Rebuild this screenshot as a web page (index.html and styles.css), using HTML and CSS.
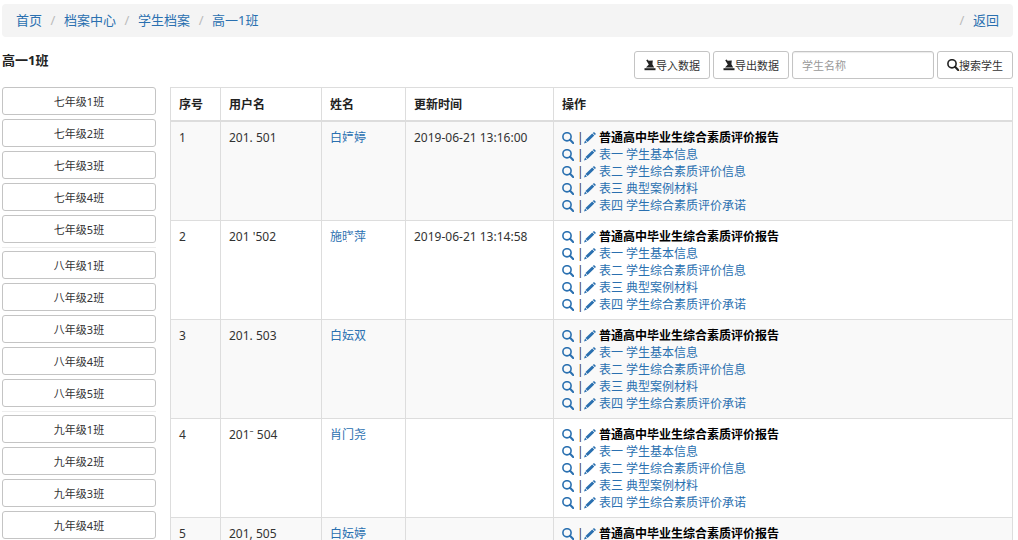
FILE: index.html
```html
<!DOCTYPE html>
<html lang="zh-CN">
<head>
  <meta charset="UTF-8" />
  <meta name="viewport" content="width=device-width, initial-scale=1.0"/>
  <title>学生档案</title>
  <link rel="stylesheet" href="styles.css">
</head>
<body>
  <svg class="sprite" aria-hidden="true">
    <symbol id="i-search" viewBox="0 0 12 12">
      <circle cx="5" cy="4.8" r="4.1" fill="none" stroke="currentColor" stroke-width="1.6"/>
      <path d="M8 7.8L11.2 11" stroke="currentColor" stroke-width="2.1" stroke-linecap="round"/>
    </symbol>
    <symbol id="i-pencil" viewBox="0 0 12 12">
      <path d="M10 0L12 1.9L10.8 3.1L8.8 1.1ZM8.2 1.6L10.3 3.6L3.6 10L1.5 7.9ZM1.1 8.5L3 10.4L0 11.6Z" fill="currentColor"/>
    </symbol>
    <symbol id="i-transfer" viewBox="0 0 12 12">
      <path d="M0.5 9.2H11.5V11.2H0.5Z" fill="currentColor"/>
      <path d="M2.2 1.2L3.6 0.6L4.6 1.8L8.8 1.4L8.4 5.2L10.2 8.4H2L4.8 5.4Z" fill="currentColor"/>
    </symbol>
  </svg>

  <nav class="breadcrumb">
    <ol>
      <li><a href="#">首页</a></li>
      <li><a href="#">档案中心</a></li>
      <li><a href="#">学生档案</a></li>
      <li><a href="#">高一1班</a></li>
    </ol>
    <span class="back"><a href="#">返回</a></span>
  </nav>

  <header class="toolbar">
    <h1>高一1班</h1>
    <form class="tools">
      <button type="button" class="btn"><svg class="icon"><use href="#i-transfer"/></svg>导入数据</button>
      <button type="button" class="btn"><svg class="icon"><use href="#i-transfer"/></svg>导出数据</button>
      <input type="text" class="search" placeholder="学生名称" aria-label="学生名称">
      <button type="button" class="btn"><svg class="icon"><use href="#i-search"/></svg>搜索学生</button>
    </form>
  </header>

  <div class="content">
    <aside class="classes">
      <div class="group">
        <button type="button" class="btn">七年级1班</button>
        <button type="button" class="btn">七年级2班</button>
        <button type="button" class="btn">七年级3班</button>
        <button type="button" class="btn">七年级4班</button>
        <button type="button" class="btn">七年级5班</button>
      </div>
      <div class="group">
        <button type="button" class="btn">八年级1班</button>
        <button type="button" class="btn">八年级2班</button>
        <button type="button" class="btn">八年级3班</button>
        <button type="button" class="btn">八年级4班</button>
        <button type="button" class="btn">八年级5班</button>
      </div>
      <div class="group">
        <button type="button" class="btn">九年级1班</button>
        <button type="button" class="btn">九年级2班</button>
        <button type="button" class="btn">九年级3班</button>
        <button type="button" class="btn">九年级4班</button>
      </div>
    </aside>

    <table class="students">
      <colgroup>
        <col class="c-no"><col class="c-user"><col class="c-name"><col class="c-time"><col>
      </colgroup>
      <thead>
        <tr><th>序号</th><th>用户名</th><th>姓名</th><th>更新时间</th><th>操作</th></tr>
      </thead>
      <tbody>
        <tr>
          <td>1</td>
          <td>201. 501</td>
          <td><a href="#">白<span class="masked">婷</span>婷</a></td>
          <td>2019-06-21 13:16:00</td>
          <td>
            <ul class="forms">
              <li><a href="#" aria-label="查看"><svg class="icon"><use href="#i-search"/></svg></a><i>|</i><a href="#" aria-label="编辑"><svg class="icon"><use href="#i-pencil"/></svg></a><b>普通高中毕业生综合素质评价报告</b></li>
              <li><a href="#" aria-label="查看"><svg class="icon"><use href="#i-search"/></svg></a><i>|</i><a href="#"><svg class="icon"><use href="#i-pencil"/></svg>表一 学生基本信息</a></li>
              <li><a href="#" aria-label="查看"><svg class="icon"><use href="#i-search"/></svg></a><i>|</i><a href="#"><svg class="icon"><use href="#i-pencil"/></svg>表二 学生综合素质评价信息</a></li>
              <li><a href="#" aria-label="查看"><svg class="icon"><use href="#i-search"/></svg></a><i>|</i><a href="#"><svg class="icon"><use href="#i-pencil"/></svg>表三 典型案例材料</a></li>
              <li><a href="#" aria-label="查看"><svg class="icon"><use href="#i-search"/></svg></a><i>|</i><a href="#"><svg class="icon"><use href="#i-pencil"/></svg>表四 学生综合素质评价承诺</a></li>
            </ul>
          </td>
        </tr>
        <tr>
          <td>2</td>
          <td>201 '502</td>
          <td><a href="#">施<span class="masked">晓</span>萍</a></td>
          <td>2019-06-21 13:14:58</td>
          <td>
            <ul class="forms">
              <li><a href="#" aria-label="查看"><svg class="icon"><use href="#i-search"/></svg></a><i>|</i><a href="#" aria-label="编辑"><svg class="icon"><use href="#i-pencil"/></svg></a><b>普通高中毕业生综合素质评价报告</b></li>
              <li><a href="#" aria-label="查看"><svg class="icon"><use href="#i-search"/></svg></a><i>|</i><a href="#"><svg class="icon"><use href="#i-pencil"/></svg>表一 学生基本信息</a></li>
              <li><a href="#" aria-label="查看"><svg class="icon"><use href="#i-search"/></svg></a><i>|</i><a href="#"><svg class="icon"><use href="#i-pencil"/></svg>表二 学生综合素质评价信息</a></li>
              <li><a href="#" aria-label="查看"><svg class="icon"><use href="#i-search"/></svg></a><i>|</i><a href="#"><svg class="icon"><use href="#i-pencil"/></svg>表三 典型案例材料</a></li>
              <li><a href="#" aria-label="查看"><svg class="icon"><use href="#i-search"/></svg></a><i>|</i><a href="#"><svg class="icon"><use href="#i-pencil"/></svg>表四 学生综合素质评价承诺</a></li>
            </ul>
          </td>
        </tr>
        <tr>
          <td>3</td>
          <td>201. 503</td>
          <td><a href="#">白妘双</a></td>
          <td></td>
          <td>
            <ul class="forms">
              <li><a href="#" aria-label="查看"><svg class="icon"><use href="#i-search"/></svg></a><i>|</i><a href="#" aria-label="编辑"><svg class="icon"><use href="#i-pencil"/></svg></a><b>普通高中毕业生综合素质评价报告</b></li>
              <li><a href="#" aria-label="查看"><svg class="icon"><use href="#i-search"/></svg></a><i>|</i><a href="#"><svg class="icon"><use href="#i-pencil"/></svg>表一 学生基本信息</a></li>
              <li><a href="#" aria-label="查看"><svg class="icon"><use href="#i-search"/></svg></a><i>|</i><a href="#"><svg class="icon"><use href="#i-pencil"/></svg>表二 学生综合素质评价信息</a></li>
              <li><a href="#" aria-label="查看"><svg class="icon"><use href="#i-search"/></svg></a><i>|</i><a href="#"><svg class="icon"><use href="#i-pencil"/></svg>表三 典型案例材料</a></li>
              <li><a href="#" aria-label="查看"><svg class="icon"><use href="#i-search"/></svg></a><i>|</i><a href="#"><svg class="icon"><use href="#i-pencil"/></svg>表四 学生综合素质评价承诺</a></li>
            </ul>
          </td>
        </tr>
        <tr>
          <td>4</td>
          <td>201⁻ 504</td>
          <td><a href="#">肖门尧</a></td>
          <td></td>
          <td>
            <ul class="forms">
              <li><a href="#" aria-label="查看"><svg class="icon"><use href="#i-search"/></svg></a><i>|</i><a href="#" aria-label="编辑"><svg class="icon"><use href="#i-pencil"/></svg></a><b>普通高中毕业生综合素质评价报告</b></li>
              <li><a href="#" aria-label="查看"><svg class="icon"><use href="#i-search"/></svg></a><i>|</i><a href="#"><svg class="icon"><use href="#i-pencil"/></svg>表一 学生基本信息</a></li>
              <li><a href="#" aria-label="查看"><svg class="icon"><use href="#i-search"/></svg></a><i>|</i><a href="#"><svg class="icon"><use href="#i-pencil"/></svg>表二 学生综合素质评价信息</a></li>
              <li><a href="#" aria-label="查看"><svg class="icon"><use href="#i-search"/></svg></a><i>|</i><a href="#"><svg class="icon"><use href="#i-pencil"/></svg>表三 典型案例材料</a></li>
              <li><a href="#" aria-label="查看"><svg class="icon"><use href="#i-search"/></svg></a><i>|</i><a href="#"><svg class="icon"><use href="#i-pencil"/></svg>表四 学生综合素质评价承诺</a></li>
            </ul>
          </td>
        </tr>
        <tr>
          <td>5</td>
          <td>201, 505</td>
          <td><a href="#">白妘婷</a></td>
          <td></td>
          <td>
            <ul class="forms">
              <li><a href="#" aria-label="查看"><svg class="icon"><use href="#i-search"/></svg></a><i>|</i><a href="#" aria-label="编辑"><svg class="icon"><use href="#i-pencil"/></svg></a><b>普通高中毕业生综合素质评价报告</b></li>
            </ul>
          </td>
        </tr>
      </tbody>
    </table>
  </div>
</body>
</html>
```

FILE: styles.css
```css
:root {
  --link: #2a70b0;
  --text: #333;
  --line: #ddd;
  --btn-line: #c4c4c4;
}

* {
  box-sizing: border-box;
}

body {
  margin: 0;
  padding: 4px 5px 0 2px;
  font: 12px/17px "Noto Sans", "Noto Sans CJK SC", sans-serif;
  color: var(--text);
  background: #fff;
}

a {
  color: var(--link);
  text-decoration: none;
}

.sprite {
  display: none;
}

.icon {
  width: 12px;
  height: 12px;
  flex: none;
}

.breadcrumb {
  display: flex;
  justify-content: space-between;
  padding: 7px 14px;
  font-size: 13px;
  line-height: 19px;
  background: #f4f4f4;
  border-radius: 4px;
}

.breadcrumb ol {
  display: flex;
  margin: 0;
  padding: 0;
  list-style: none;
}

.breadcrumb li + li::before,
.back::before {
  content: "/";
  display: inline-block;
  width: 22px;
  text-align: center;
  color: #bbb;
}

.toolbar {
  display: flex;
  justify-content: space-between;
  align-items: flex-start;
  padding: 14px 0 8px;
}

h1 {
  margin: 0;
  font-size: 13px;
  line-height: 19px;
  color: #222;
}

.tools {
  display: flex;
  gap: 3px;
}

.btn {
  display: flex;
  align-items: center;
  justify-content: center;
  height: 28px;
  padding: 0 9px;
  font: inherit;
  font-size: 11px;
  color: var(--text);
  background: #fff;
  border: 1px solid var(--btn-line);
  border-radius: 3px;
}

.btn .icon {
  color: #222;
}

.search {
  width: 142px;
  height: 28px;
  padding: 0 9px;
  font: inherit;
  font-size: 11px;
  color: #555;
  border: 1px solid var(--btn-line);
  border-radius: 3px;
  box-shadow: inset 0 1px 1px rgba(0, 0, 0, 0.08);
}

.search::placeholder {
  color: #999;
}

.content {
  display: grid;
  grid-template-columns: 154px 1fr;
  gap: 14px;
  align-items: start;
}

.group {
  display: flex;
  flex-direction: column;
  gap: 4px;
}

.group + .group {
  margin-top: 4px;
  padding-top: 3px;
  border-top: 1px solid #eee;
}

.students {
  width: 100%;
  table-layout: fixed;
  border-collapse: collapse;
}

.c-no { width: 50px; }
.c-user { width: 101px; }
.c-name { width: 84px; }
.c-time { width: 148px; }

.students th,
.students td {
  padding: 7px 8px 6px;
  text-align: left;
  vertical-align: top;
  border: 1px solid var(--line);
}

.students th {
  padding: 8px 8px 7px;
  color: #222;
  border-bottom-width: 2px;
}

.students tbody tr:nth-child(odd) {
  background: #f9f9f9;
}

/* part of the name is blanked out */
.masked {
  position: relative;
}

.masked::after {
  content: "";
  position: absolute;
  right: 0;
  bottom: 2px;
  width: 7px;
  height: 8px;
  background: #f9f9f9;
}

.students tr:nth-child(even) .masked::after {
  background: #fff;
}

.forms {
  margin: 0;
  padding: 0;
  list-style: none;
}

.forms li,
.forms a {
  display: flex;
  align-items: center;
  gap: 3px;
}

.forms i {
  width: 4px;
  text-align: center;
  font-style: normal;
}

.forms b {
  color: #000;
}
```
